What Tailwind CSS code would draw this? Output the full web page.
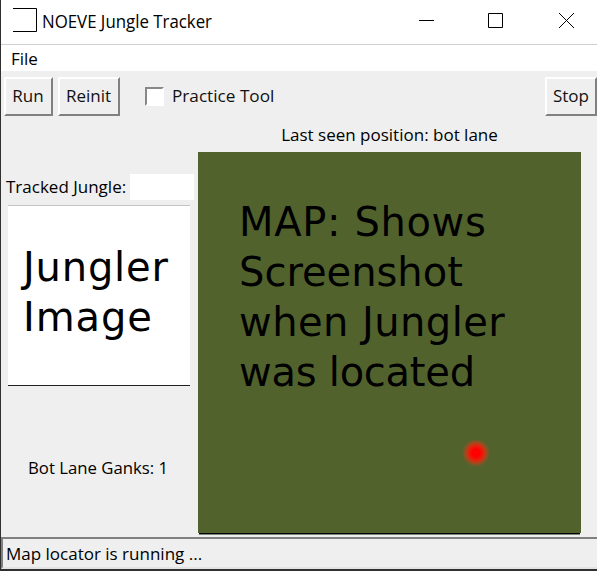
<!DOCTYPE html>
<html lang="en">
<head>
<meta charset="utf-8">
<title>NOEVE Jungle Tracker</title>
<script src="https://cdn.jsdelivr.net/npm/@tailwindcss/browser@4"></script>
</head>
<body class="m-0 overflow-hidden bg-[#efefef] text-black">
<div class="flex h-[571px] w-[597px] flex-col overflow-hidden border-l border-l-[#303030] border-b-2 border-b-[#303030] font-['Open_Sans','Noto_Sans',sans-serif] text-[17px] leading-6 whitespace-nowrap">
  <header class="flex h-[45px] shrink-0 items-start border-b border-[#d0d0d0] bg-white">
    <svg class="ml-3 mt-2 h-6 w-6 shrink-0" viewBox="0 0 24 24" fill="none" stroke="#000"><path d="M0 .5H23.5V23.5H0"/></svg>
    <h1 class="ml-[5px] mt-[9px] w-[170px] origin-left scale-x-[.935] text-[18px]">NOEVE Jungle Tracker</h1>
    <div class="ml-auto flex pt-3">
      <svg class="mr-[54px] h-4 w-[15px]" viewBox="0 0 15 16" fill="none" stroke="#000"><path d="M0 8.5H15"/></svg>
      <svg class="mr-[56px] mt-px h-[15px] w-[15px]" viewBox="0 0 15 15" fill="none" stroke="#000"><path d="M.5 .5H14.5V14.5H.5Z"/></svg>
      <svg class="mr-[23px] mt-px h-[15px] w-[15px]" viewBox="0 0 15 15" fill="none" stroke="#000"><path d="M0 0L15 15M15 0L0 15"/></svg>
    </div>
  </header>
  <nav class="h-[26px] shrink-0 bg-white pl-[10px] pt-[2px]"><span class="inline-block origin-left">File</span></nav>
  <div class="flex h-[47px] shrink-0 items-start pl-[3px] pt-[6px] text-[#111]">
    <button class="flex h-[39px] w-[49px] items-center justify-center border-2 border-t-white border-l-white border-r-[#808080] border-b-[#808080] pr-px pb-px"><span>Run</span></button>
    <button class="ml-[5px] flex h-[39px] w-[62px] items-center justify-center border-2 border-t-white border-l-white border-r-[#808080] border-b-[#808080] pr-px pb-px"><span>Reinit</span></button>
    <label class="ml-[25px] flex h-[39px] items-center"><span class="-mt-px h-[19px] w-[19px] border-2 border-t-[#888] border-l-[#888] border-r-white border-b-white bg-white"></span><span class="-mt-px ml-2 origin-left scale-x-[1.01]">Practice Tool</span></label>
    <button class="ml-auto flex h-[39px] w-[52px] items-center justify-center border-2 border-t-white border-l-white border-r-[#808080] border-b-[#808080] pb-px"><span>Stop</span></button>
  </div>
  <main class="flex h-[419px] shrink-0">
    <section class="w-[197px] shrink-0">
      <div class="mt-[56px] flex h-[26px] pl-[5px]"><span class="mt-px w-[124px] origin-left">Tracked Jungle:</span><span class="w-[64px] bg-white"></span></div>
      <div class="ml-[7px] mt-[5px] h-[181px] w-[182px] border-t border-b border-t-[#c4c4c4] border-b-[#202020] bg-white pl-[15px] pt-[36px] font-['DejaVu_Sans',sans-serif] text-[40px] leading-[50px]">
        <p class="tracking-[.8px]">Jungler</p>
        <p class="tracking-[.9px]">Image</p>
      </div>
      <div class="mt-[70px] pl-[27px]"><span class="inline-block origin-left scale-x-[.985]">Bot Lane Ganks: 1</span></div>
    </section>
    <section>
      <div class="flex h-[34px] w-[383px] justify-center pt-[5px]"><span>Last seen position: bot lane</span></div>
      <div class="relative h-[381px] w-[383px] bg-[#52622d] pl-[41px] pt-[45px] font-['DejaVu_Sans',sans-serif] text-[40px] leading-[50px]">
        <p class="tracking-[.65px]">MAP: Shows</p>
        <p>Screenshot</p>
        <p class="tracking-[.45px]">when Jungler</p>
        <p class="tracking-[-.25px]">was located</p>
        <span class="absolute left-[264px] top-[287px] h-7 w-7 rounded-full bg-[radial-gradient(circle,#f00_0px,#f00_4px,#f0230be0_8px,#d0401880_11px,transparent_14px)]"></span>
      </div>
      <div class="ml-px h-[2px] w-[381px] border-t border-t-black bg-[#7b887b]"></div>
    </section>
  </main>
  <footer class="h-[32px] shrink-0 border-2 border-r-0 border-t-[#808080] border-l-[#808080] border-b-[#e3e3e3] pl-[3px] pt-[3px]"><span class="inline-block origin-left">Map locator is running ...</span></footer>
</div>
</body>
</html>
